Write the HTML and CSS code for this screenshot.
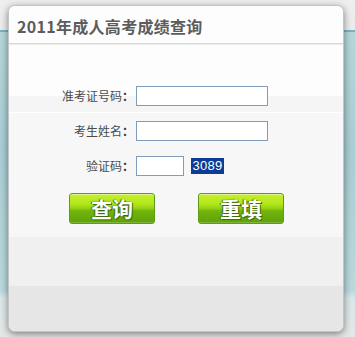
FILE: index.html
```html
<!DOCTYPE html>
<html lang="zh-CN">
<head>
<meta charset="utf-8">
<title>2011年成人高考成绩查询</title>
<link rel="stylesheet" href="styles.css">
</head>
<body>
<div class="dialog">
  <div class="header">
    <h1 class="title">2011年成人高考成绩查询</h1>
  </div>
  <div class="body">
    <form class="form">
      <label class="label" for="zkz">准考证号码<span class="colon">：</span></label>
      <div class="field"><input class="input" id="zkz" type="text"></div>
      <label class="label" for="xm">考生姓名<span class="colon">：</span></label>
      <div class="field"><input class="input" id="xm" type="text"></div>
      <label class="label" for="yzm">验证码<span class="colon">：</span></label>
      <div class="field captcha-field">
        <input class="input input-short" id="yzm" type="text">
        <span class="captcha">3089</span>
      </div>
    </form>
    <div class="buttons">
      <button class="btn" type="button">查询</button>
      <button class="btn" type="button">重填</button>
    </div>
  </div>
</div>
</body>
</html>
```

FILE: styles.css
```css
html, body {
  margin: 0;
  padding: 0;
}
body {
  width: 355px;
  height: 337px;
  overflow: hidden;
  padding-top: 5px;
  box-sizing: border-box;
  font-family: "Noto Sans CJK SC", "Liberation Sans", sans-serif;
  background:
    linear-gradient(to bottom,
      #eeeeee 0px, #ebebeb 30px,
      #78b2bd 30px, #78b2bd 32px,
      #b4d6da 32px, #a8cdd3 150px, #b9d8dc 290px,
      #d9e6e8 298px, #e6e6e6 337px);
}
.dialog {
  margin-left: 8px;
  width: 336px;
  height: 327px;
  box-sizing: border-box;
  border: 1px solid #c4c4c4;
  border-radius: 7px;
  background: #fdfdfd;
  box-shadow: 0 2px 7px rgba(0, 0, 0, 0.45);
  overflow: hidden;
  display: flex;
  flex-direction: column;
}
.header {
  height: 37px;
  flex: none;
  border-bottom: 1px solid #d6d6d6;
  box-shadow: 0 1px 0 #ececec;
  background: #fdfdfd;
  padding-left: 8px;
  display: flex;
  align-items: center;
}
.title {
  margin: 0;
  font-size: 16px;
  font-weight: bold;
  color: #5c5c5c;
  letter-spacing: 0.3px;
  padding-top: 2px;
}
.body {
  flex: 1;
  margin-top: 1px;
  background: linear-gradient(to bottom,
    #fdfdfd 0px, #fdfdfd 51px,
    #f5f5f5 51px, #f5f5f5 67px,
    #ffffff 67px, #ffffff 68px,
    #f7f7f7 68px, #f7f7f7 192px,
    #f0f0f0 192px, #f0f0f0 241px,
    #e6e6e6 241px, #e6e6e6 100%);
  padding-top: 41px;
}
.form {
  display: grid;
  grid-template-columns: 125px auto;
  column-gap: 2px;
  row-gap: 15px;
  align-items: center;
  margin: 0;
}
.label {
  text-align: right;
  font-size: 12px;
  color: #4a4a4a;
  line-height: 20px;
}
.colon {
  font-weight: bold;
  color: #3a3a3a;
}
.field {
  display: flex;
  align-items: center;
  height: 20px;
}
.input {
  width: 132px;
  height: 20px;
  box-sizing: border-box;
  border: 1px solid #7f9db9;
  background: #fff;
  padding: 0 2px;
  margin: 0;
  font-size: 12px;
}
.input-short {
  width: 48px;
}
.captcha {
  margin-left: 7px;
  width: 33px;
  height: 16px;
  background: #0c3c93;
  color: #fff;
  font-family: "Liberation Sans", sans-serif;
  font-size: 13px;
  line-height: 16px;
  text-align: center;
  letter-spacing: 0.3px;
}
.buttons {
  display: flex;
  gap: 43px;
  padding-left: 60px;
  margin-top: 17px;
}
.btn {
  width: 86px;
  height: 31px;
  box-sizing: border-box;
  border: 1px solid #5f9a18;
  border-radius: 3px;
  padding: 0;
  background: linear-gradient(to bottom,
    #c4f02c 0%, #b2e61c 35%, #94d012 50%,
    #72b40c 58%, #5fa20a 100%);
  box-shadow: inset 0 1px 0 rgba(255,255,255,0.45), inset 0 -1px 0 rgba(255,255,255,0.2);
  color: #ffffff;
  font-family: "Noto Sans CJK SC", sans-serif;
  font-size: 21px;
  font-weight: bold;
  line-height: 29px;
  letter-spacing: 0;
  text-shadow: 0 0 1px #2f5d00, 1px 1px 0 #3f7008, -1px 0 1px #3f7008;
  cursor: pointer;
}
```
